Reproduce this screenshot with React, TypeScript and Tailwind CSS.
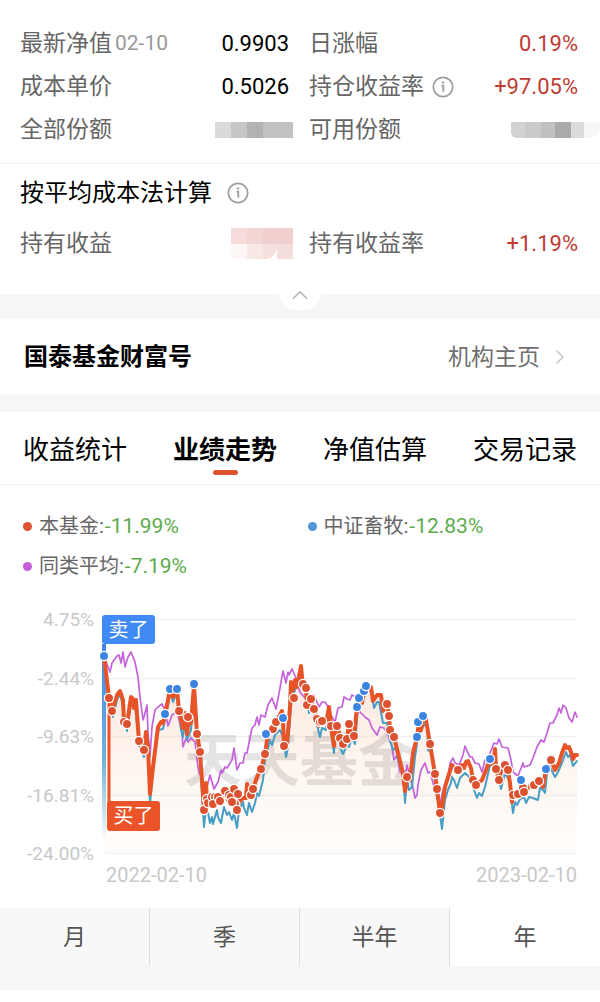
import { useState } from "react";
import type { ReactNode } from "react";
import { ChevronRight, ChevronUp } from "lucide-react";

const gridLines = [
  { y: 19, label: "4.75%" },
  { y: 78, label: "-2.44%" },
  { y: 136, label: "-9.63%" },
  { y: 195, label: "-16.81%" },
  { y: 253, label: "-24.00%" },
];

const fundLine =
  "104,56 109,98 112,111 117,95 120,91 123,100 124,122 127,124 131,97 133,99 134,108 136,100 139,141 144,151 146,132 148,147 150,194 153,167 158,127 161,122 163,123 165,114 168,100 170,89 173,97 177,89 179,111 183,128 185,113 187,134 189,117 191,123 194,85 197,134 200,152 204,209 206,183 207,200 210,197 213,203 216,198 220,200 224,191 228,200 232,195 234,189 238,194 236,208 239,202 243,198 246,198 247,184 251,195 253,189 257,177 261,169 265,154 268,133 273,129 276,122 282,111 283,120 284,146 287,143 290,107 291,82 293,90 295,80 297,87 301,66 302,77 303,85 306,88 307,105 311,99 314,109 317,119 319,126 322,121 326,123 329,107 331,126 334,146 336,127 338,127 340,138 343,144 347,139 349,124 351,137 354,136 357,107 359,98 362,103 364,91 366,86 368,90 371,87 373,101 377,95 381,95 383,111 385,103 387,104 389,116 390,130 394,137 398,153 403,173 405,191 407,177 410,180 413,153 417,137 419,122 421,130 423,116 426,120 430,144 435,174 437,189 440,213 442,208 445,187 448,177 452,165 456,170 458,170 462,165 464,168 466,162 468,161 471,168 473,180 476,185 482,180 486,170 490,159 493,165 495,149 496,169 499,180 502,167 505,165 508,170 510,183 512,202 513,195 518,194 520,197 523,188 524,192 530,186 534,185 539,181 543,187 546,169 551,160 555,170 559,163 562,153 565,145 567,148 569,147 571,152 573,159 575,155 577,155";

const indexLine =
  "104,56 109,104 113,117 117,100 120,94 123,106 127,131 131,103 135,105 139,145 144,157 146,138 148,152 150,204 153,170 158,130 163,129 168,106 170,92 173,102 177,92 181,130 183,137 185,122 187,140 191,130 194,90 197,140 200,160 204,227 206,207 208,213 210,223 212,217 213,224 217,210 218,217 221,223 224,207 227,215 229,212 232,220 234,213 237,228 239,210 243,202 244,208 247,215 249,203 252,212 255,203 257,193 259,196 263,180 265,160 270,140 272,145 275,135 280,130 283,137 286,157 288,147 291,107 293,95 295,90 301,68 305,90 309,113 312,103 315,117 320,137 322,128 326,130 328,113 334,153 336,130 340,147 343,154 347,145 349,147 352,137 355,144 358,107 366,94 371,88 374,108 377,102 379,102 383,123 387,123 390,140 393,150 396,147 398,160 400,165 403,173 405,203 407,180 409,190 412,187 415,157 418,137 423,127 427,120 428,150 432,153 435,183 438,200 442,229 445,200 448,190 451,183 452,177 454,180 457,188 460,178 465,173 470,178 473,187 477,198 479,193 482,196 485,187 490,165 495,155 498,173 501,189 505,173 509,180 513,213 515,202 517,205 520,199 522,198 524,197 526,203 529,197 533,198 538,200 540,188 543,190 545,193 547,173 550,167 555,177 558,172 562,163 566,152 568,157 570,155 573,166 577,161";

const peerLine =
  "104,56 110,72 112,63 117,56 119,55 121,63 123,52 125,67 128,57 131,52 135,62 138,77 140,97 143,120 144,117 147,105 148,133 150,157 152,127 155,110 158,107 162,104 165,110 168,126 172,115 175,113 178,115 182,133 183,147 186,138 188,142 191,138 195,142 197,160 199,173 202,177 203,193 207,187 210,175 214,189 218,182 221,170 222,173 225,167 227,168 232,160 234,148 237,170 240,163 243,163 245,153 247,153 249,143 252,128 255,125 257,117 259,125 261,115 265,117 268,105 272,98 276,109 280,88 283,71 286,83 288,72 289,75 292,69 296,78 300,92 305,98 310,100 314,95 319,107 322,102 325,102 328,107 332,117 335,122 338,108 342,107 344,97 347,99 350,100 352,95 356,97 360,112 365,117 369,120 372,128 377,135 380,127 384,128 388,135 392,147 394,160 397,155 400,172 405,177 407,165 410,177 412,183 415,198 417,195 418,185 421,170 425,163 428,173 430,172 433,183 437,197 440,205 443,190 448,177 450,163 453,158 455,163 459,165 463,155 465,146 468,153 470,157 472,157 475,163 479,164 482,172 485,160 488,158 492,148 494,143 497,144 499,139 502,147 508,148 511,160 513,172 518,176 523,163 524,167 530,165 533,158 537,147 541,140 544,142 547,133 550,123 553,123 557,115 559,108 561,113 563,105 566,108 569,118 572,122 575,112 577,117";

const buys = [
  [109, 98], [112, 111], [124, 122], [127, 124], [139, 141], [144, 150], [179, 111], [188, 117],
  [197, 134], [200, 152], [207, 199], [204, 210], [208, 203], [212, 197], [215, 197], [213, 204],
  [218, 197], [220, 201], [225, 191], [229, 195], [231, 197], [235, 204], [232, 202], [234, 189],
  [238, 194], [237, 210], [251, 195], [253, 189], [261, 169], [265, 154], [273, 129], [276, 122],
  [284, 146], [294, 98], [303, 84], [307, 105], [306, 88], [311, 99], [314, 109], [317, 119],
  [320, 122], [322, 121], [331, 126], [337, 126], [349, 124], [340, 138], [343, 144], [347, 139],
  [354, 136], [387, 104], [389, 116], [390, 130], [394, 137], [407, 177], [430, 144], [435, 174],
  [437, 189], [440, 213], [458, 170], [473, 180], [476, 185], [496, 169], [499, 180], [505, 165],
  [508, 170], [513, 195], [518, 194], [523, 188], [524, 192], [534, 185], [539, 181], [551, 160],
];

const sells = [
  [104, 56], [165, 114], [170, 89], [177, 89], [194, 84], [266, 134], [283, 118], [357, 107],
  [359, 98], [364, 91], [366, 86], [417, 137], [418, 122], [423, 116], [490, 159], [521, 180],
  [546, 169],
];

const legend = [
  { name: "本基金", value: "-11.99%", dot: "bg-[#e0532f]" },
  { name: "中证畜牧", value: "-12.83%", dot: "bg-[#4f97d7]" },
  { name: "同类平均", value: "-7.19%", dot: "bg-[#c65cdc]" },
];

const tabs = ["收益统计", "业绩走势", "净值估算", "交易记录"];
const periods = ["月", "季", "半年", "年"];

function InfoButton({ label }: { label: string }) {
  return (
    <button aria-label={label} className="ml-2 shrink-0">
      <svg width="22" height="22" viewBox="0 0 22 22" fill="none" stroke="#9c9c9c">
        <circle cx="11" cy="11" r="9.7" strokeWidth="1.7" />
        <path d="M9.6 9.7h1.7v6" strokeWidth="1.8" />
        <circle cx="11" cy="6.5" r="0.8" fill="#9c9c9c" />
      </svg>
    </button>
  );
}

function Row({ label, children }: { label: ReactNode; children: ReactNode }) {
  return (
    <div className="flex h-[43px] items-center justify-between">
      <dt className="flex items-center text-[23px] text-[#666]">{label}</dt>
      <dd className="flex items-center text-[22px]">{children}</dd>
    </div>
  );
}

function TrendChart() {
  return (
    <svg viewBox="0 0 600 300" className="block h-auto w-full" role="img" aria-label="业绩走势">
      <defs>
        <linearGradient id="area" x1="0" y1="0" x2="0" y2="1">
          <stop offset="0" stopColor="#ee6b3b" stopOpacity="0.2" />
          <stop offset="0.6" stopColor="#f0a060" stopOpacity="0.09" />
          <stop offset="1" stopColor="#f0b070" stopOpacity="0.03" />
        </linearGradient>
        <linearGradient id="stem" x1="0" y1="0" x2="0" y2="1">
          <stop offset="0" stopColor="#3f86ee" />
          <stop offset="0.6" stopColor="#6fb4dc" />
          <stop offset="1" stopColor="#6fb4dc" stopOpacity="0" />
        </linearGradient>
      </defs>

      {/* Grid and axis labels */}
      {gridLines.map((line) => (
        <g key={line.label}>
          <path d={`M106 ${line.y + 0.5}H577`} stroke="#f2f2f2" strokeWidth="1.5" />
          <text x="94" y={line.y + 7} textAnchor="end" fontSize="19" fill="#c8c8c8">
            {line.label}
          </text>
        </g>
      ))}
      <text x="106" y="282" fontSize="20" fill="#c8c8c8">2022-02-10</text>
      <text x="577" y="282" textAnchor="end" fontSize="20" fill="#c8c8c8">2023-02-10</text>

      {/* Series */}
      <polygon points={`${fundLine} 577,253 104,253`} fill="url(#area)" />
      <text x="184" y="181" fontSize="58" fontWeight="700" fill="#000" opacity="0.1">天天基金</text>
      <rect x="102" y="44" width="4" height="196" fill="url(#stem)" />
      <g fill="none" strokeLinejoin="round" strokeLinecap="round">
        <polyline points={peerLine} stroke="#c463db" strokeWidth="1.7" />
        <polyline points={indexLine} stroke="#479dc4" strokeWidth="2" />
        <polyline points={fundLine} stroke="#e85427" strokeWidth="4" />
        <path d="M109 98V204" stroke="#e85427" strokeWidth="3" />
      </g>

      {/* Trade markers */}
      <g stroke="#fff" strokeWidth="1.3">
        {buys.map(([x, y]) => (
          <circle key={`${x}-${y}`} cx={x} cy={y} r="4.6" fill="#dc5230" />
        ))}
        {sells.map(([x, y]) => (
          <circle key={`${x}-${y}`} cx={x} cy={y} r="4.6" fill="#3d84e0" />
        ))}
      </g>

      <rect x="102" y="15" width="53" height="29" rx="3" fill="#3f8af5" />
      <text x="128.5" y="37" textAnchor="middle" fontSize="20" fill="#fff">卖了</text>
      <rect x="107" y="201" width="53" height="30" rx="3" fill="#ea5428" />
      <text x="133.5" y="223" textAnchor="middle" fontSize="20" fill="#fff">买了</text>
    </svg>
  );
}

export default function App() {
  const [tab, setTab] = useState("业绩走势");
  const [period, setPeriod] = useState("年");

  return (
    <main className="bg-white font-['Roboto','Noto_Sans_CJK_SC',sans-serif] leading-none text-black">
      {/* Holdings */}
      <dl className="grid grid-cols-2 gap-x-5 border-b border-[#f3f3f3] pt-[22px] pr-[22px] pb-3 pl-5">
        <Row label={<>最新净值<span className="ml-[3px] text-[21px] text-[#999]">02-10</span></>}>0.9903</Row>
        <Row label="日涨幅"><span className="text-[#c03a34]">0.19%</span></Row>
        <Row label="成本单价">0.5026</Row>
        <Row label={<>持仓收益率<InfoButton label="持仓收益率说明" /></>}>
          <span className="text-[#c03a34]">+97.05%</span>
        </Row>
        <Row label="全部份额">
          <span className="-mr-1 flex h-4" aria-hidden="true">
            <span className="w-4 bg-[#dadada]" />
            <span className="w-4 bg-[#c6c6c6]" />
            <span className="w-4 bg-[#b2b2b2]" />
            <span className="w-[30px] bg-[#c2c2c2]" />
          </span>
        </Row>
        <Row label="可用份额">
          <span className="-mr-[22px] flex h-4" aria-hidden="true">
            <span className="w-[14px] rounded-bl-md bg-[#d2d2d2]" />
            <span className="w-4 bg-[#cacaca]" />
            <span className="w-[14px] bg-[#c0c0c0]" />
            <span className="w-4 bg-[#aaa]" />
            <span className="w-[13px] bg-[#dcdcdc]" />
            <span className="w-4 rounded-br-xl bg-[#f7f7f7]" />
          </span>
        </Row>
      </dl>

      {/* Average cost */}
      <section className="pr-[22px] pb-[29px] pl-5">
        <h2 className="flex h-[58px] items-center text-[24px]">
          按平均成本法计算
          <span className="ml-[7px] flex"><InfoButton label="平均成本法说明" /></span>
        </h2>
        <dl className="grid grid-cols-2 gap-x-5">
          <Row label="持有收益">
            <span className="-mr-1 block w-[62px]" aria-hidden="true">
              <span className="flex h-4">
                <span className="w-4 bg-[#f6dcda]" />
                <span className="w-4 bg-[#f3d5d3]" />
                <span className="w-[30px] bg-[#f0cfce]" />
              </span>
              <span className="flex h-[15px]">
                <span className="w-4 bg-[#fdf7f5]" />
                <span className="w-4 bg-[#f9e9e6]" />
                <span className="w-[14px] rounded-br-xl bg-[#f6dfdd]" />
                <span className="w-4 bg-[#f5dddc]" />
              </span>
            </span>
          </Row>
          <Row label="持有收益率"><span className="text-[#c03a34]">+1.19%</span></Row>
        </dl>
      </section>

      <div className="relative h-[25px] bg-[#f6f6f6]">
        <button
          aria-label="收起"
          className="absolute left-1/2 top-0 flex h-4 w-[42px] -translate-x-1/2 justify-center rounded-b-full bg-white text-[#b5b5b5]"
        >
          <ChevronUp size={26} strokeWidth={1.5} className="-mt-3 shrink-0" />
        </button>
      </div>

      {/* Fund company */}
      <section className="flex h-[76px] items-center justify-between pr-7 pl-6">
        <h2 className="text-[24px] font-bold">国泰基金财富号</h2>
        <a href="#home" className="flex items-center gap-2 text-[23px] text-[#707070]">
          机构主页
          <ChevronRight size={24} strokeWidth={1.5} className="text-[#c4c4c4]" />
        </a>
      </section>
      <div className="h-[17px] bg-[#f6f6f6]" />

      {/* Tabs */}
      <nav className="grid grid-cols-4 border-b border-[#f0f0f0]">
        {tabs.map((name) => (
          <button
            key={name}
            onClick={() => setTab(name)}
            className={`flex h-[72px] flex-col items-center pt-[25px] text-[26px] ${tab === name ? "font-bold" : ""}`}
          >
            {name}
            {tab === name && <span className="mt-[7px] h-[5px] w-[25px] rounded-full bg-[#dc5430]" />}
          </button>
        ))}
      </nav>

      {/* Legend */}
      <ul className="grid grid-cols-2 pt-[21px] pr-2 pl-[23px] text-[20px] text-[#666]">
        {legend.map((item) => (
          <li key={item.name} className="flex h-10 items-center">
            <span className={`mr-[7px] size-[9px] rounded-full ${item.dot}`} />
            {item.name}:<span className="ml-px text-[21px] text-[#5bab4d]">{item.value}</span>
          </li>
        ))}
      </ul>

      <div className="mt-[14px]">
        <TrendChart />
      </div>

      {/* Period */}
      <div className="mt-2 grid grid-cols-4 border-b-[24px] border-[#f6f6f6]">
        {periods.map((name) => (
          <button
            key={name}
            onClick={() => setPeriod(name)}
            className={`h-[58px] border-r border-r-[#ddd] text-[23px] text-[#555] last:border-r-0 ${period === name ? "bg-white" : "bg-[#f8f8f8]"}`}
          >
            {name}
          </button>
        ))}
      </div>
    </main>
  );
}
